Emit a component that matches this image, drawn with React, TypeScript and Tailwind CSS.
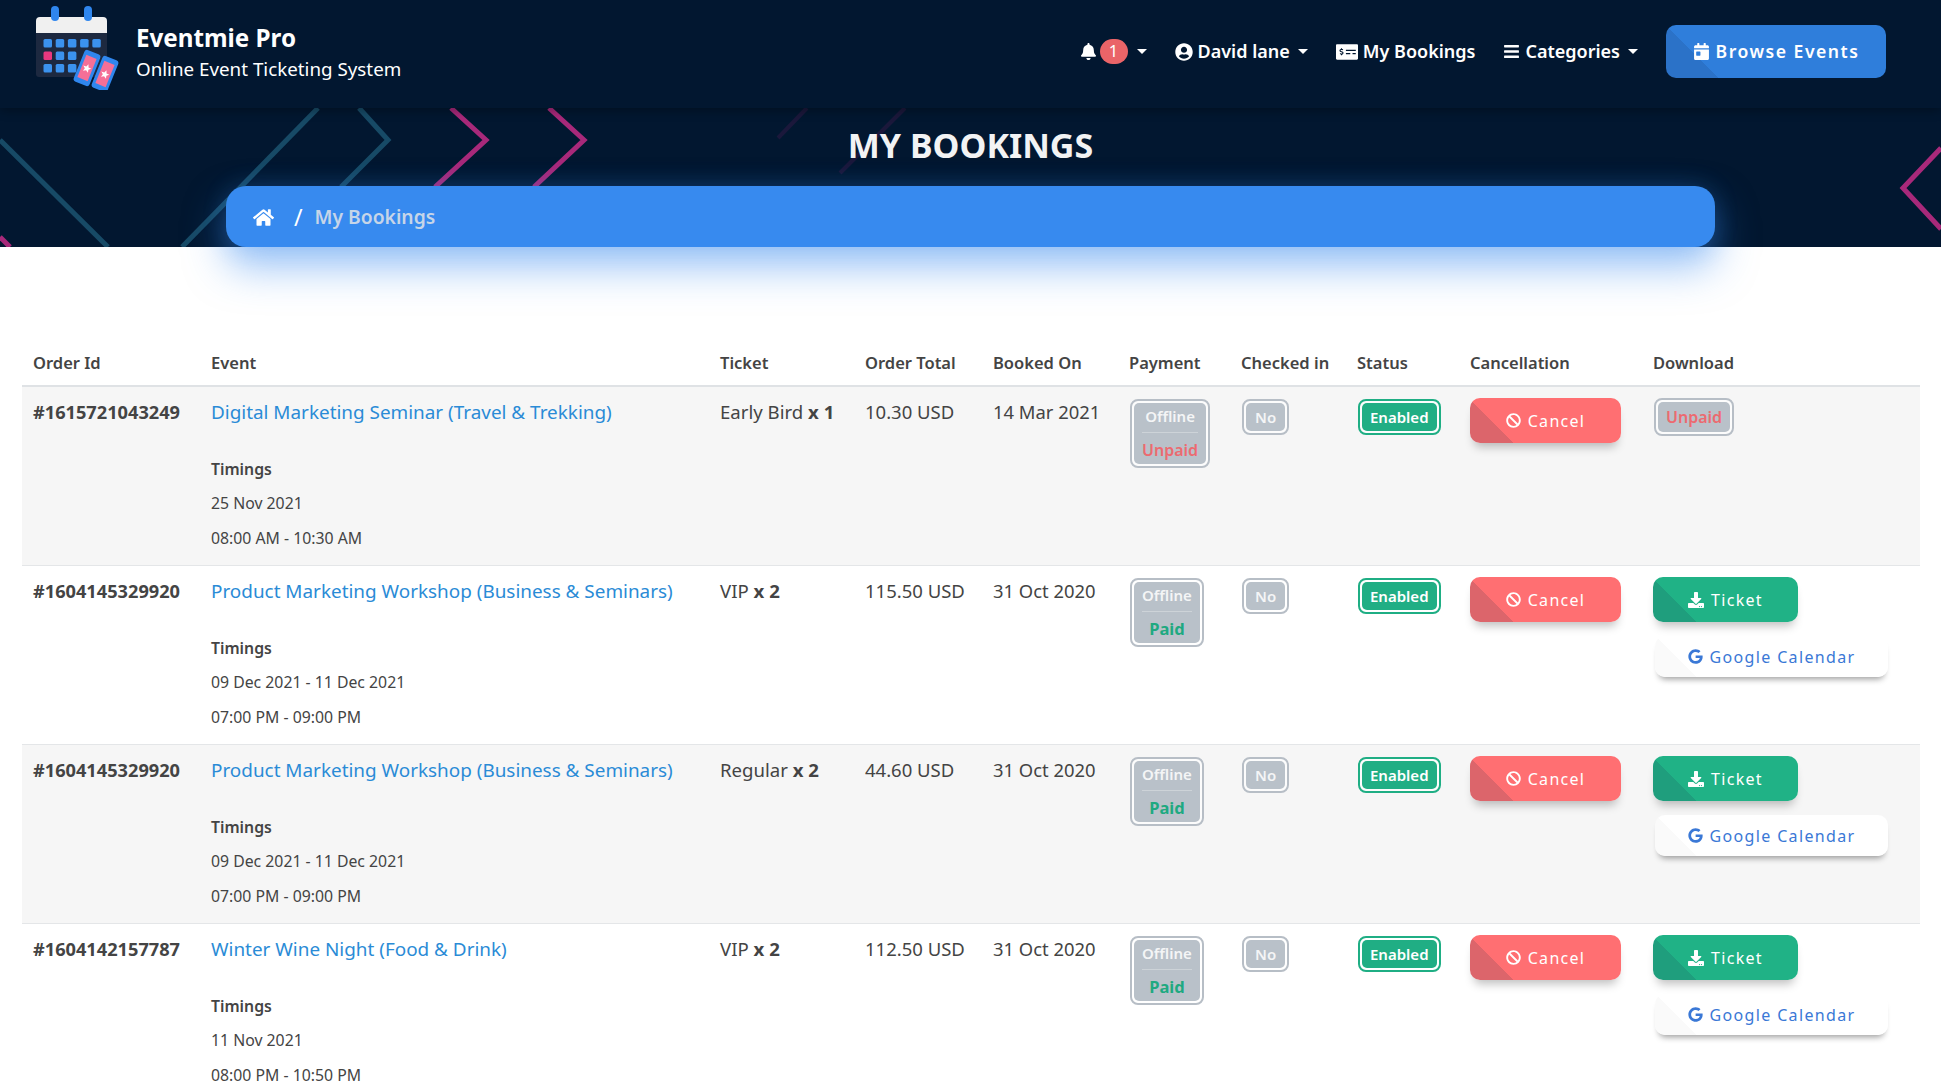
import React from 'react';
import { FaBell, FaUserCircle, FaMoneyCheckAlt, FaBars, FaCalendarDay, FaHome, FaBan, FaDownload, FaGoogle } from 'react-icons/fa';

const Caret = () => (
  <span className="inline-block w-0 h-0 border-x-[5px] border-x-transparent border-t-[5px] border-t-white" />
);

const Logo = () => (
  <svg width="90" height="88" viewBox="30 2 90 88" className="shrink-0">
    <rect x="36" y="30" width="71" height="47" rx="3" fill="#1d2940" />
    <path d="M36 33v-12a4 4 0 0 1 4-4h63a4 4 0 0 1 4 4v12z" fill="#f0f0f0" />
    <rect x="51" y="6" width="8" height="15" rx="4" fill="#2f86ee" />
    <rect x="84" y="6" width="8" height="15" rx="4" fill="#2f86ee" />
    {[0, 1, 2, 3, 4].map((c) => (
      <rect key={c} x={43.5 + c * 12.2} y="39" width="8.5" height="8.5" rx="1.5" fill="#3b92ee" />
    ))}
    <rect x="43.5" y="51.5" width="8.5" height="8.5" rx="1.5" fill="#e9387f" />
    {[1, 2].map((c) => (
      <rect key={c} x={43.5 + c * 12.2} y="51.5" width="8.5" height="8.5" rx="1.5" fill="#3b92ee" />
    ))}
    {[0, 1, 2].map((c) => (
      <rect key={c} x={43.5 + c * 12.2} y="64" width="8.5" height="8.5" rx="1.5" fill="#3b92ee" />
    ))}
    <g transform="rotate(22 87 68)">
      <rect x="78.5" y="51" width="17" height="34" rx="3" fill="#2f86ee" />
      <rect x="81.5" y="56" width="11" height="24" fill="#f56f97" />
      <path d="M87 64l1.2 2.9 3.1.2-2.4 2 .8 3-2.7-1.7-2.7 1.7.8-3-2.4-2 3.1-.2z" fill="#fff" />
    </g>
    <g transform="rotate(22 105 74)">
      <rect x="96.5" y="57" width="17" height="34" rx="3" fill="#2f86ee" />
      <rect x="99.5" y="62" width="11" height="24" fill="#f56f97" />
      <path d="M105 70l1.2 2.9 3.1.2-2.4 2 .8 3-2.7-1.7-2.7 1.7.8-3-2.4-2 3.1-.2z" fill="#fff" />
    </g>
  </svg>
);

const Ringed: React.FC<{ outer: string; inner: string; children: React.ReactNode }> = ({ outer, inner, children }) => (
  <span className={`inline-block border-2 rounded-[8px] p-[2px] bg-white/70 ${outer}`}>
    <span className={`block rounded-[5px] text-[15px] font-semibold leading-[22px] text-center ${inner}`}>{children}</span>
  </span>
);

const GreyBadge: React.FC<{ className?: string; children: React.ReactNode }> = ({ className, children }) => (
  <Ringed outer="border-[#b7bec6]" inner={`bg-[#b9c1c9] text-[#f4f5f6] ${className ?? ''}`}>{children}</Ringed>
);

const PaymentBadge: React.FC<{ paid: boolean }> = ({ paid }) => (
  <GreyBadge className="px-[8px] py-[2px]">
    <span className="block pb-[5px] border-b border-[#cdd3d8]">Offline</span>
    {paid ? (
      <span className="block pt-[6px] pb-[1px] text-[16.5px] font-bold text-[#1fa981]">Paid</span>
    ) : (
      <span className="block pt-[6px] pb-[1px] text-[16px] text-[#ec6a70]">Unpaid</span>
    )}
  </GreyBadge>
);

const CancelButton = () => (
  <button className="flex items-center justify-center gap-[7px] w-[151px] h-[45px] rounded-[10px] text-white text-[16px] tracking-[1.3px] bg-[linear-gradient(45deg,#dc656b_31px,#ff6f72_31px)] shadow-[0_8px_10px_-4px_rgba(0,0,0,0.25)]">
    <FaBan size={15} />
    Cancel
  </button>
);

const TicketButton = () => (
  <button className="flex items-center justify-center gap-[7px] w-[145px] h-[45px] rounded-[10px] text-white text-[16px] tracking-[1.3px] bg-[linear-gradient(45deg,#1f9e7d_31px,#20b286_31px)] shadow-[0_8px_10px_-4px_rgba(0,0,0,0.25)]">
    <FaDownload size={16} />
    Ticket
  </button>
);

const CalendarButton = () => (
  <button className="flex items-center justify-center gap-[7px] w-[233px] h-[41px] ml-[2px] mt-[14px] rounded-[10px] text-[#3a78d6] text-[16px] tracking-[1.35px] bg-[linear-gradient(45deg,#fafafa_29px,#ffffff_29px)] shadow-[0_6px_6px_-4px_rgba(0,0,0,0.4)]">
    <FaGoogle size={15} />
    Google Calendar
  </button>
);

type Booking = {
  id: string;
  event: string;
  date: string;
  time: string;
  ticket: string;
  qty: string;
  total: string;
  booked: string;
  paid: boolean;
};

const bookings: Booking[] = [
  { id: '#1615721043249', event: 'Digital Marketing Seminar (Travel & Trekking)', date: '25 Nov 2021', time: '08:00 AM - 10:30 AM', ticket: 'Early Bird', qty: 'x 1', total: '10.30 USD', booked: '14 Mar 2021', paid: false },
  { id: '#1604145329920', event: 'Product Marketing Workshop (Business & Seminars)', date: '09 Dec 2021 - 11 Dec 2021', time: '07:00 PM - 09:00 PM', ticket: 'VIP', qty: 'x 2', total: '115.50 USD', booked: '31 Oct 2020', paid: true },
  { id: '#1604145329920', event: 'Product Marketing Workshop (Business & Seminars)', date: '09 Dec 2021 - 11 Dec 2021', time: '07:00 PM - 09:00 PM', ticket: 'Regular', qty: 'x 2', total: '44.60 USD', booked: '31 Oct 2020', paid: true },
  { id: '#1604142157787', event: 'Winter Wine Night (Food & Drink)', date: '11 Nov 2021', time: '08:00 PM - 10:50 PM', ticket: 'VIP', qty: 'x 2', total: '112.50 USD', booked: '31 Oct 2020', paid: true },
];

const columns = [
  { label: 'Order Id', width: 'w-[178px]' },
  { label: 'Event', width: 'w-[509px]' },
  { label: 'Ticket', width: 'w-[145px]' },
  { label: 'Order Total', width: 'w-[128px]' },
  { label: 'Booked On', width: 'w-[136px]' },
  { label: 'Payment', width: 'w-[112px]' },
  { label: 'Checked in', width: 'w-[116px]' },
  { label: 'Status', width: 'w-[113px]' },
  { label: 'Cancellation', width: 'w-[183px]' },
  { label: 'Download', width: 'w-[278px]' },
];

export default function App() {
  return (
    <div className="relative h-[1092px] overflow-hidden bg-white font-['Noto_Sans','Open_Sans',sans-serif] text-[#444]">
      <div className="relative h-[247px] bg-[#021730] overflow-hidden">
        <svg className="absolute left-0 top-0" width="1941" height="247" fill="none" strokeWidth="5">
          <g stroke="#174a66">
            <path d="M359 108l29 32-47 47" />
            <path d="M318 108L182 247" />
            <path d="M0 140l108 107" />
          </g>
          <g stroke="#a8297a">
            <path d="M451 108l35 32-51 47" />
            <path d="M549 108l35 32-50 47" />
            <path d="M0 237l10 10" />
            <path d="M1941 148l-38 40 38 41" />
          </g>
          <g stroke="#4a1a50" strokeOpacity="0.35" strokeWidth="4">
            <path d="M807 108l-29 30" />
            <path d="M905 108l-65 65" />
          </g>
        </svg>
        <nav className="relative h-[108px] flex items-center justify-between pb-[5px] pl-[35px] pr-[55px] bg-[#021730] shadow-[0_2px_10px_rgba(0,0,0,0.35)]">
          <div className="flex items-center gap-[16px]">
            <div className="-ml-[5px] -mt-[11px] w-[90px] flex justify-start">
              <Logo />
            </div>
            <div className="mt-[2px] text-white">
              <div className="text-[24.2px] font-bold leading-[33px]">Eventmie Pro</div>
              <div className="text-[18.8px] leading-[30px]">Online Event Ticketing System</div>
            </div>
          </div>
          <div className="flex items-center text-white text-[18px] font-semibold">
            <FaBell size={17} />
            <span className="flex items-center justify-center w-[28px] h-[25px] ml-[3px] rounded-full bg-[#ea6468] text-[16.5px] font-normal">1</span>
            <span className="ml-[9px] flex"><Caret /></span>
            <FaUserCircle size={18} className="ml-[28px]" />
            <span className="ml-[5px]">David lane</span>
            <span className="ml-[8px] flex"><Caret /></span>
            <FaMoneyCheckAlt size={22} className="ml-[28px]" />
            <span className="ml-[5px]">My Bookings</span>
            <FaBars size={17} className="ml-[28px]" />
            <span className="ml-[5px]">Categories</span>
            <span className="ml-[8px] flex"><Caret /></span>
            <button className="ml-[28px] flex items-center justify-center gap-[6px] w-[220px] h-[53px] rounded-[10px] text-[17.6px] font-semibold tracking-[1.5px] bg-[linear-gradient(45deg,#2b72c8_37px,#2f7edb_37px)]">
              <FaCalendarDay size={17} />
              Browse Events
            </button>
          </div>
        </nav>
        <h1 className="relative text-center text-[#f2f3f4] text-[34px] font-bold leading-[44px] mt-[15px]">MY BOOKINGS</h1>
      </div>

      <div className="absolute left-[226px] top-[186px] w-[1489px] h-[61px] rounded-[20px] bg-[#378aef] shadow-[0_20px_40px_rgba(55,138,239,0.5),0_0_24px_rgba(55,138,239,0.2)] flex items-center pl-[27px] pt-[1px] text-[19.3px] font-semibold">
        <FaHome size={21} className="text-white" />
        <span className="ml-[20px] text-white text-[23px] font-normal">/</span>
        <span className="ml-[12px] text-[#c6d5e8]">My Bookings</span>
      </div>

      <main className="px-[22px] pt-[93px]">
        <table className="table-fixed w-[1898px] border-collapse text-left">
          <thead>
            <tr className="h-[46px] border-b-2 border-[#dfe2e5]">
              {columns.map((col) => (
                <th key={col.label} className={`${col.width} px-[11px] pt-[2px] align-middle text-[16.5px] font-semibold text-[#444]`}>
                  {col.label}
                </th>
              ))}
            </tr>
          </thead>
          <tbody>
            {bookings.map((b, i) => (
              <tr key={i} className={`h-[179px] border-b border-[#e4e6e8] ${i % 2 === 0 ? 'bg-[#f6f6f6]' : 'bg-white'}`}>
                <td className="px-[11px] pt-[12px] align-top text-[18.2px] font-bold leading-[27px] whitespace-nowrap">{b.id}</td>
                <td className="px-[11px] pt-[12px] pb-[10px] align-top">
                  <a className="block text-[18.9px] leading-[27px] text-[#2a8bd6]">{b.event}</a>
                  <div className="mt-[25.5px] text-[15.8px] leading-[34.5px]">
                    <div className="font-semibold">Timings</div>
                    <div>{b.date}</div>
                    <div>{b.time}</div>
                  </div>
                </td>
                <td className="p-[11px] align-top text-[18.6px] leading-[27px] whitespace-nowrap">
                  {b.ticket} <b>{b.qty}</b>
                </td>
                <td className="p-[11px] align-top text-[18.5px] leading-[27px] whitespace-nowrap">{b.total}</td>
                <td className="p-[11px] align-top text-[18.4px] leading-[27px] whitespace-nowrap">{b.booked}</td>
                <td className="px-[12px] pt-[12px] align-top"><PaymentBadge paid={b.paid} /></td>
                <td className="px-[12px] pt-[12px] align-top"><GreyBadge className="px-[9px] py-[3px]">No</GreyBadge></td>
                <td className="px-[12px] pt-[12px] align-top">
                  <Ringed outer="border-[#1fae84]" inner="bg-[#20ae84] text-white px-[8px] py-[3px]">Enabled</Ringed>
                </td>
                <td className="px-[11px] pt-[11px] align-top"><CancelButton /></td>
                <td className="px-[11px] pt-[11px] align-top">
                  {b.paid ? (
                    <>
                      <TicketButton />
                      <CalendarButton />
                    </>
                  ) : (
                    <span className="ml-[1px] inline-block">
                      <GreyBadge className="px-[8px] py-[4px] text-[16px] !text-[#ec6a70]">Unpaid</GreyBadge>
                    </span>
                  )}
                </td>
              </tr>
            ))}
          </tbody>
        </table>
      </main>
    </div>
  );
}
